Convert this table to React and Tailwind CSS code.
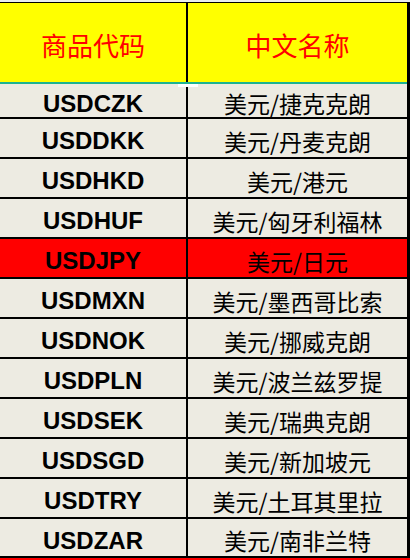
const rows = [
  { code: "USDCZK", name: "美元/捷克克朗" },
  { code: "USDDKK", name: "美元/丹麦克朗" },
  { code: "USDHKD", name: "美元/港元" },
  { code: "USDHUF", name: "美元/匈牙利福林" },
  { code: "USDJPY", name: "美元/日元", hot: true },
  { code: "USDMXN", name: "美元/墨西哥比索" },
  { code: "USDNOK", name: "美元/挪威克朗" },
  { code: "USDPLN", name: "美元/波兰兹罗提" },
  { code: "USDSEK", name: "美元/瑞典克朗" },
  { code: "USDSGD", name: "美元/新加坡元" },
  { code: "USDTRY", name: "美元/土耳其里拉" },
  { code: "USDZAR", name: "美元/南非兰特" },
];

const cjk = { fontFamily: '"Noto Sans CJK SC", sans-serif' };
const latin = { fontFamily: '"Liberation Sans", Arial, sans-serif' };

export default function App() {
  return (
    <div className="relative w-[410px] h-[560px] overflow-hidden bg-[#ff0000]">
      <div className="h-[2px] bg-[#e9edf0]" />
      <div className="border-t border-r-[3px] border-black bg-[#edebe2]">
        {/* Header */}
        <div className="flex h-[79px] bg-[#ffff00]">
          <div
            className="w-[188px] border-r-2 border-black flex items-center justify-center pt-[4px] text-[26px] text-[#ff0000]"
            style={cjk}
          >
            商品代码
          </div>
          <div
            className="flex-1 flex items-center justify-center pt-[4px] text-[26px] text-[#ff0000]"
            style={cjk}
          >
            中文名称
          </div>
        </div>
        <div className="h-[2px] bg-[#1db392]" />

        {/* Rows */}
        {rows.map((r, i) => (
          <div
            key={r.code}
            className={`flex border-b-2 border-black ${i === 0 ? "h-[35px]" : i === rows.length - 1 ? "h-[39px]" : "h-[40px]"} ${r.hot ? "bg-[#ff0000]" : ""}`}
          >
            <div
              className="w-[188px] border-r-2 border-black flex items-center justify-center pt-[6px] text-[24px] font-bold text-black"
              style={latin}
            >
              {r.code}
            </div>
            <div
              className="flex-1 flex items-center justify-center pt-[6px] text-[23px] text-black"
              style={cjk}
            >
              {r.name}
            </div>
          </div>
        ))}
      </div>
      <div className="absolute left-[178px] top-[84px] w-[20px] h-[3px] bg-white" />
    </div>
  );
}
